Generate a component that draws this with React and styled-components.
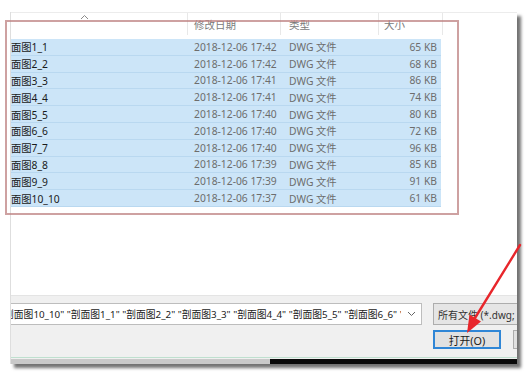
import React from 'react'
import styled, { createGlobalStyle } from "styled-components";

const GlobalStyle = createGlobalStyle`
  html, body {
    margin: 0;
    padding: 0;
    background: #ffffff;
  }
  body {
    font-family: "Noto Sans", "Noto Sans CJK SC", sans-serif;
    font-size: 10.3px;
    color: #1a1a1a;
  }
`;

const Page = styled.div`
  position: relative;
  width: 528px;
  height: 376px;
  overflow: hidden;
  padding: 12px 0 0 10px;
  box-sizing: border-box;
`;

const Dialog = styled.div`
  position: relative;
  width: 507px;
  height: 352px;
  display: flex;
  flex-direction: column;
  background: #ffffff;
  border-left: 1px solid #dedede;
  box-sizing: border-box;
  box-shadow: 4px 4px 3px rgba(0, 0, 0, 0.55);
`;

const ListArea = styled.div`
  height: 283px;
  display: flex;
  flex-direction: column;
  background: #ffffff;
  overflow: hidden;
`;

const HeaderRow = styled.div`
  height: 27px;
  display: flex;
  border-top: 1px solid #ececec;
  box-sizing: border-box;
`;

const HeadCell = styled.div`
  width: ${({ w }) => w}px;
  height: 22px;
  box-sizing: border-box;
  padding: 4px 0 0 ${({ pad }) => pad || 0}px;
  color: #7a7a7a;
  font-size: 10.5px;
  border-right: ${({ last }) => (last ? "none" : "1px solid #e8e8e8")};
`;

const Caret = styled.svg`
  display: block;
  margin-top: -3px;
`;

const Rows = styled.div`
  width: 430px;
  display: flex;
  flex-direction: column;
`;

const Row = styled.div`
  height: 16.8px;
  display: flex;
  align-items: center;
  background: #cce5f8;
  border-bottom: 1px solid #b9d8f0;
  box-sizing: border-box;
  white-space: nowrap;
`;

const Cell = styled.div`
  width: ${({ w }) => w}px;
  box-sizing: border-box;
  padding: ${({ right, pad }) => (right ? "0 4px 0 0" : `0 0 0 ${pad ?? 6}px`)};
  text-align: ${({ right }) => (right ? "right" : "left")};
  color: ${({ muted }) => (muted ? "#6d6d6d" : "#1a1a1a")};
  overflow: hidden;
`;

const Footer = styled.div`
  height: 62px;
  background: #f0f0f0;
  border-top: 1px solid #e4e4e4;
  box-sizing: border-box;
  display: flex;
  flex-direction: column;
  padding-top: 7px;
  gap: 5px;
  overflow: hidden;
`;

const InputRow = styled.div`
  display: flex;
  gap: 11px;
  height: 22px;
`;

const FileInput = styled.div`
  width: 411px;
  flex-shrink: 0;
  background: #ffffff;
  border: 1px solid #bdbdbd;
  border-left: none;
  box-sizing: border-box;
  display: flex;
  align-items: center;
  gap: 6px;
  padding-right: 5px;
  overflow: hidden;
`;

const InputText = styled.div`
  flex: 1;
  overflow: hidden;
  white-space: nowrap;
  text-indent: -7px;
  font-size: 9.8px;
`;

const FilterBox = styled.div`
  flex: 1;
  background: #e5e5e5;
  border: 1px solid #adadad;
  border-right: none;
  box-sizing: border-box;
  display: flex;
  align-items: center;
  padding-left: 4px;
  white-space: nowrap;
  overflow: hidden;
  font-size: 10px;
  color: #333;
`;

const ButtonRow = styled.div`
  display: flex;
  justify-content: flex-end;
  gap: 12px;
  height: 19px;
`;

const Button = styled.div`
  width: ${({ w }) => w}px;
  background: #e1e1e1;
  border: ${({ primary }) => (primary ? "2px solid #2f86d6" : "1px solid #adadad")};
  border-right: ${({ cut }) => (cut ? "none" : undefined)};
  box-sizing: border-box;
  display: flex;
  align-items: center;
  justify-content: center;
  font-size: 10.8px;
`;

const BottomStrip = styled.div`
  flex: 1;
  display: flex;
  flex-direction: column;
  border-top: 1px solid #bfe0cf;
  background: #f0f0f0;
`;

const Bar = styled.div`
  margin-top: 1px;
  flex: 1;
  display: flex;
`;

const BarPart = styled.div`
  width: ${({ w }) => (w ? `${w}px` : "auto")};
  flex: ${({ w }) => (w ? "none" : 1)};
  background: ${({ dark }) => (dark ? "#0a0a0a" : "#c9c9c9")};
`;

const Annotation = styled.div`
  position: absolute;
  left: -6px;
  top: 8px;
  width: 454px;
  height: 195px;
  border: 2px solid rgba(190, 130, 130, 0.75);
  box-sizing: border-box;
  pointer-events: none;
`;

const Arrow = styled.svg`
  position: absolute;
  left: 0;
  top: 0;
  pointer-events: none;
`;

const rows = [
  ["面图1_1", "2018-12-06 17:42", "65 KB"],
  ["面图2_2", "2018-12-06 17:42", "68 KB"],
  ["面图3_3", "2018-12-06 17:41", "86 KB"],
  ["面图4_4", "2018-12-06 17:41", "74 KB"],
  ["面图5_5", "2018-12-06 17:40", "80 KB"],
  ["面图6_6", "2018-12-06 17:40", "72 KB"],
  ["面图7_7", "2018-12-06 17:40", "96 KB"],
  ["面图8_8", "2018-12-06 17:39", "85 KB"],
  ["面图9_9", "2018-12-06 17:39", "91 KB"],
  ["面图10_10", "2018-12-06 17:37", "61 KB"],
];

function App() {
  return (
    <Page>
      <GlobalStyle />
      <Dialog>
        <ListArea>
          <HeaderRow>
            <HeadCell w={177} pad={69}>
              <Caret width="9" height="6" viewBox="0 0 9 6">
                <path d="M1 5 L4.5 1.5 L8 5" fill="none" stroke="#8a8a8a" strokeWidth="1" />
              </Caret>
            </HeadCell>
            <HeadCell w={93} pad={6}>修改日期</HeadCell>
            <HeadCell w={98} pad={8}>类型</HeadCell>
            <HeadCell w={64} pad={5}>大小</HeadCell>
            <HeadCell w={60} last />
          </HeaderRow>
          <Rows>
            {rows.map(([name, date, size]) => (
              <Row key={name}>
                <Cell w={177} pad={0}>{name}</Cell>
                <Cell w={93} muted>{date}</Cell>
                <Cell w={98} muted pad={8}>DWG 文件</Cell>
                <Cell w={62} muted right>{size}</Cell>
              </Row>
            ))}
          </Rows>
        </ListArea>
        <Footer>
          <InputRow>
            <FileInput>
              <InputText>
                剖面图10_10" "剖面图1_1" "剖面图2_2" "剖面图3_3" "剖面图4_4" "剖面图5_5" "剖面图6_6" "剖面图7_7"
              </InputText>
              <svg width="9" height="6" viewBox="0 0 9 6">
                <path d="M1 1 L4.5 4.5 L8 1" fill="none" stroke="#666" strokeWidth="1" />
              </svg>
            </FileInput>
            <FilterBox>所有文件 (*.dwg; *.dxf)</FilterBox>
          </InputRow>
          <ButtonRow>
            <Button w={68} primary>打开(O)</Button>
            <Button w={4} cut />
          </ButtonRow>
        </Footer>
        <BottomStrip>
          <Bar>
            <BarPart w={259} />
            <BarPart dark />
          </Bar>
        </BottomStrip>
        <Annotation />
      </Dialog>
      <Arrow width="528" height="376" viewBox="0 0 528 376">
        <line x1="520" y1="245" x2="475" y2="318" stroke="#e8262b" strokeWidth="2.4" strokeLinecap="round" />
        <polygon points="467,333 469.5,314.5 481,321.5" fill="#e8262b" />
      </Arrow>
    </Page>
  )
}

export default App
